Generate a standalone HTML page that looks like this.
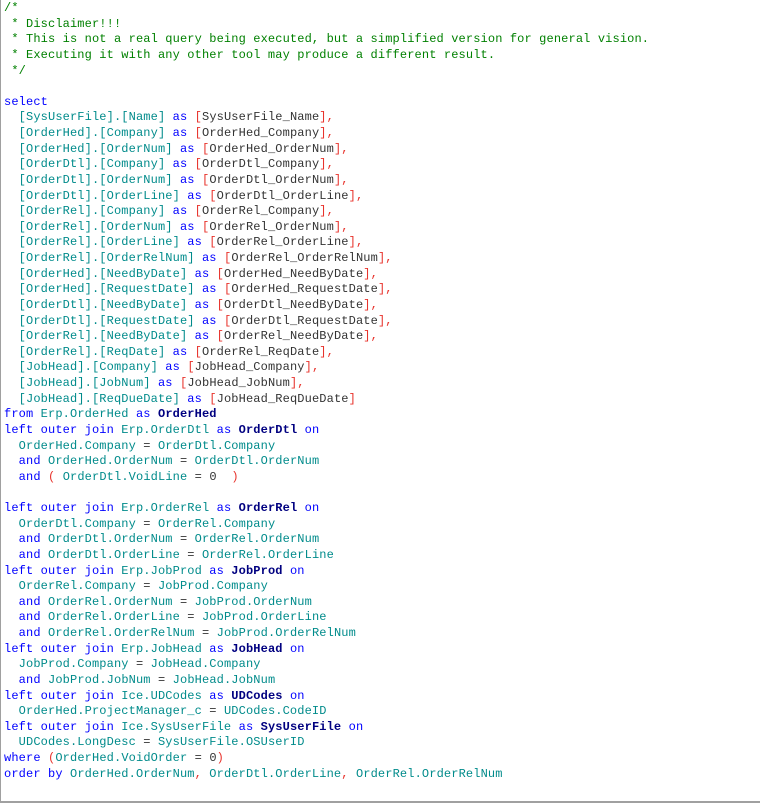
<!DOCTYPE html>
<html><head><meta charset="utf-8"><style>
html,body{margin:0;padding:0;background:#fff;width:761px;height:804px;overflow:hidden}
#f{position:absolute;left:0;top:0;width:759px;height:801px;border-left:1px solid #a0a0a0;border-bottom:2px solid #a0a0a0}
pre{margin:0;position:absolute;left:4px;top:1px;font-family:"Liberation Mono",monospace;font-size:12px;letter-spacing:0.13px;line-height:15.63px;color:#008b8b}
.c{color:#008000}.k{color:#0000ff}.r{color:#e8332c}.d{color:#333}.b{color:#000080;font-weight:bold}
</style></head><body><div id="f"></div>
<pre><span class="c">/*
 * Disclaimer!!!
 * This is not a real query being executed, but a simplified version for general vision.
 * Executing it with any other tool may produce a different result.
 */</span>

<span class="k">select</span>
  [SysUserFile].[Name] <span class="k">as</span> <span class="r">[</span><span class="d">SysUserFile_Name</span><span class="r">],</span>
  [OrderHed].[Company] <span class="k">as</span> <span class="r">[</span><span class="d">OrderHed_Company</span><span class="r">],</span>
  [OrderHed].[OrderNum] <span class="k">as</span> <span class="r">[</span><span class="d">OrderHed_OrderNum</span><span class="r">],</span>
  [OrderDtl].[Company] <span class="k">as</span> <span class="r">[</span><span class="d">OrderDtl_Company</span><span class="r">],</span>
  [OrderDtl].[OrderNum] <span class="k">as</span> <span class="r">[</span><span class="d">OrderDtl_OrderNum</span><span class="r">],</span>
  [OrderDtl].[OrderLine] <span class="k">as</span> <span class="r">[</span><span class="d">OrderDtl_OrderLine</span><span class="r">],</span>
  [OrderRel].[Company] <span class="k">as</span> <span class="r">[</span><span class="d">OrderRel_Company</span><span class="r">],</span>
  [OrderRel].[OrderNum] <span class="k">as</span> <span class="r">[</span><span class="d">OrderRel_OrderNum</span><span class="r">],</span>
  [OrderRel].[OrderLine] <span class="k">as</span> <span class="r">[</span><span class="d">OrderRel_OrderLine</span><span class="r">],</span>
  [OrderRel].[OrderRelNum] <span class="k">as</span> <span class="r">[</span><span class="d">OrderRel_OrderRelNum</span><span class="r">],</span>
  [OrderHed].[NeedByDate] <span class="k">as</span> <span class="r">[</span><span class="d">OrderHed_NeedByDate</span><span class="r">],</span>
  [OrderHed].[RequestDate] <span class="k">as</span> <span class="r">[</span><span class="d">OrderHed_RequestDate</span><span class="r">],</span>
  [OrderDtl].[NeedByDate] <span class="k">as</span> <span class="r">[</span><span class="d">OrderDtl_NeedByDate</span><span class="r">],</span>
  [OrderDtl].[RequestDate] <span class="k">as</span> <span class="r">[</span><span class="d">OrderDtl_RequestDate</span><span class="r">],</span>
  [OrderRel].[NeedByDate] <span class="k">as</span> <span class="r">[</span><span class="d">OrderRel_NeedByDate</span><span class="r">],</span>
  [OrderRel].[ReqDate] <span class="k">as</span> <span class="r">[</span><span class="d">OrderRel_ReqDate</span><span class="r">],</span>
  [JobHead].[Company] <span class="k">as</span> <span class="r">[</span><span class="d">JobHead_Company</span><span class="r">],</span>
  [JobHead].[JobNum] <span class="k">as</span> <span class="r">[</span><span class="d">JobHead_JobNum</span><span class="r">],</span>
  [JobHead].[ReqDueDate] <span class="k">as</span> <span class="r">[</span><span class="d">JobHead_ReqDueDate</span><span class="r">]</span>
<span class="k">from</span> Erp.OrderHed <span class="k">as</span> <span class="b">OrderHed</span>
<span class="k">left outer join</span> Erp.OrderDtl <span class="k">as</span> <span class="b">OrderDtl</span> <span class="k">on</span>
  OrderHed.Company <span class="d">=</span> OrderDtl.Company
  <span class="k">and</span> OrderHed.OrderNum <span class="d">=</span> OrderDtl.OrderNum
  <span class="k">and</span> <span class="r">(</span> OrderDtl.VoidLine <span class="d">=</span> <span class="d">0</span>  <span class="r">)</span>

<span class="k">left outer join</span> Erp.OrderRel <span class="k">as</span> <span class="b">OrderRel</span> <span class="k">on</span>
  OrderDtl.Company <span class="d">=</span> OrderRel.Company
  <span class="k">and</span> OrderDtl.OrderNum <span class="d">=</span> OrderRel.OrderNum
  <span class="k">and</span> OrderDtl.OrderLine <span class="d">=</span> OrderRel.OrderLine
<span class="k">left outer join</span> Erp.JobProd <span class="k">as</span> <span class="b">JobProd</span> <span class="k">on</span>
  OrderRel.Company <span class="d">=</span> JobProd.Company
  <span class="k">and</span> OrderRel.OrderNum <span class="d">=</span> JobProd.OrderNum
  <span class="k">and</span> OrderRel.OrderLine <span class="d">=</span> JobProd.OrderLine
  <span class="k">and</span> OrderRel.OrderRelNum <span class="d">=</span> JobProd.OrderRelNum
<span class="k">left outer join</span> Erp.JobHead <span class="k">as</span> <span class="b">JobHead</span> <span class="k">on</span>
  JobProd.Company <span class="d">=</span> JobHead.Company
  <span class="k">and</span> JobProd.JobNum <span class="d">=</span> JobHead.JobNum
<span class="k">left outer join</span> Ice.UDCodes <span class="k">as</span> <span class="b">UDCodes</span> <span class="k">on</span>
  OrderHed.ProjectManager_c <span class="d">=</span> UDCodes.CodeID
<span class="k">left outer join</span> Ice.SysUserFile <span class="k">as</span> <span class="b">SysUserFile</span> <span class="k">on</span>
  UDCodes.LongDesc <span class="d">=</span> SysUserFile.OSUserID
<span class="k">where</span> <span class="r">(</span>OrderHed.VoidOrder <span class="d">=</span> <span class="d">0</span><span class="r">)</span>
<span class="k">order by</span> OrderHed.OrderNum<span class="r">,</span> OrderDtl.OrderLine<span class="r">,</span> OrderRel.OrderRelNum
</pre></body></html>
